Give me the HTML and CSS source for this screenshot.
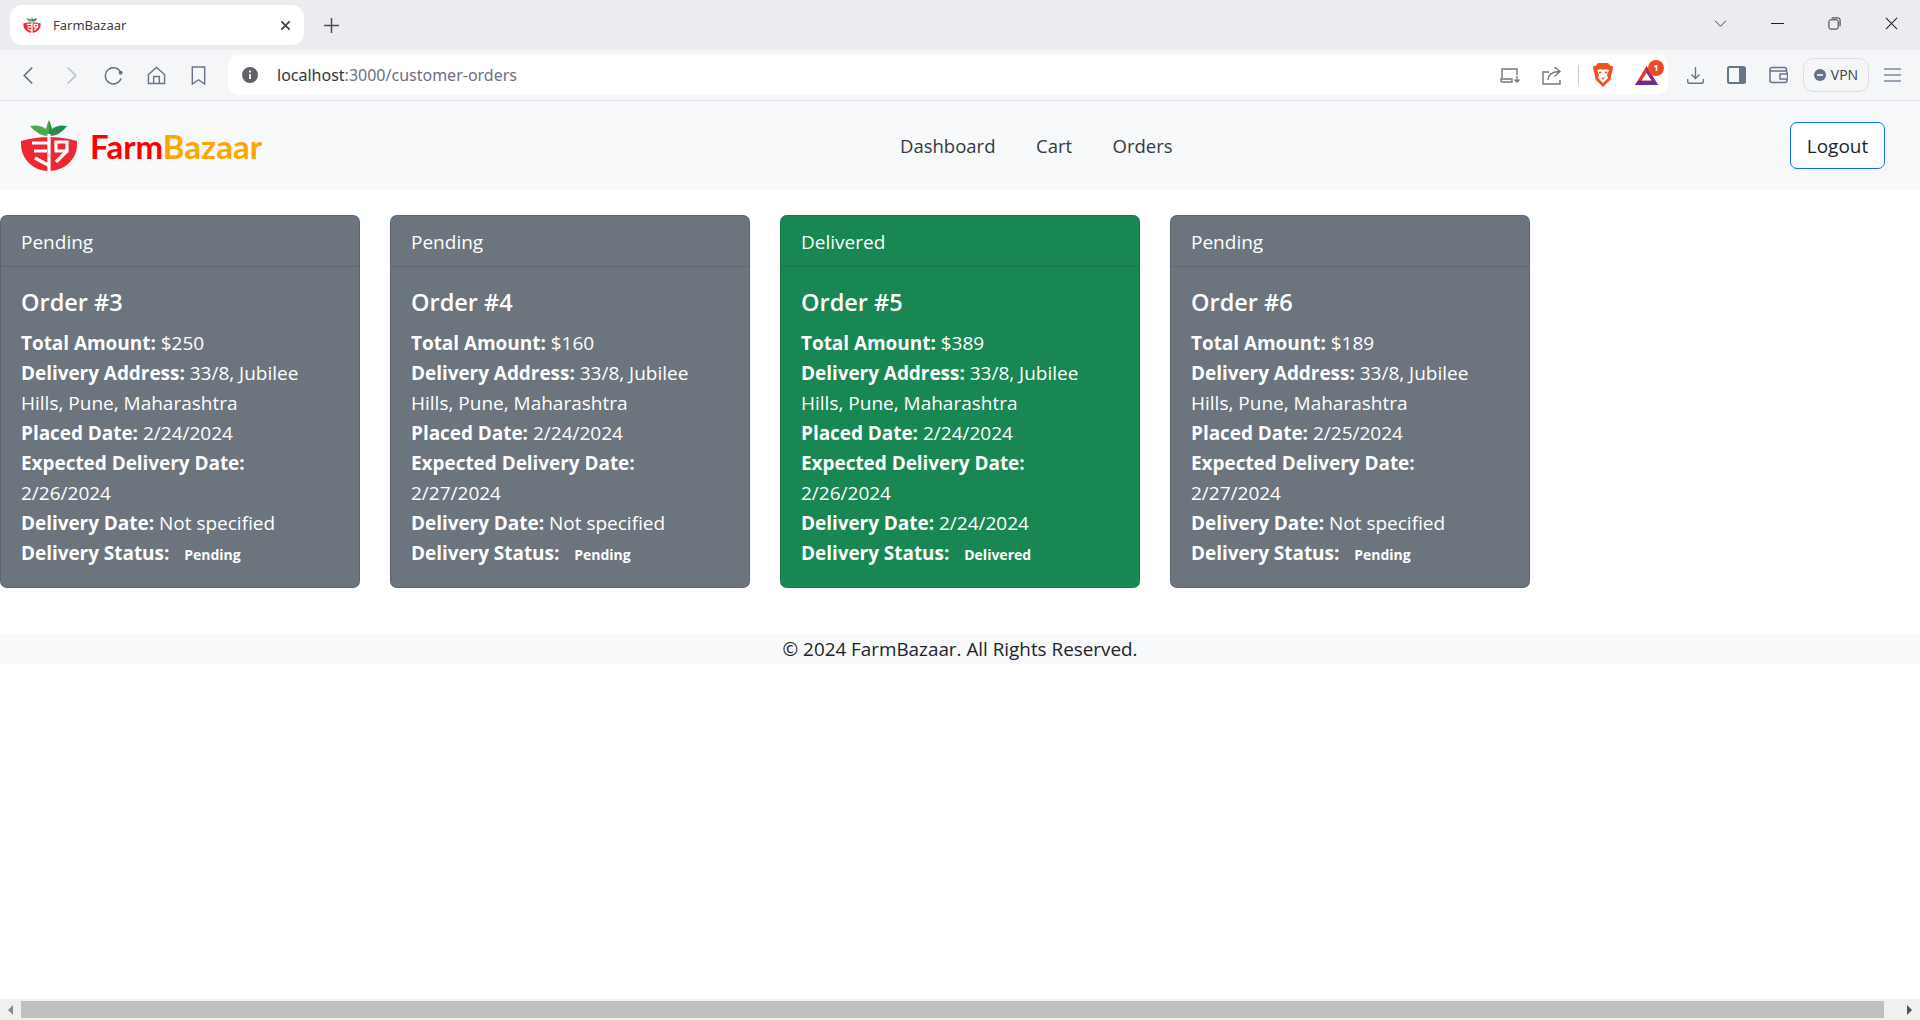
FILE: index.html
```html
<!DOCTYPE html>
<html lang="en">
<head>
  <meta charset="UTF-8">
  <title>FarmBazaar</title>
  <meta name="viewport" content="width=device-width, initial-scale=1">
  <link rel="stylesheet" href="styles.css">
</head>
<body>

<!-- browser tab strip -->
<div class="tabstrip">
  <div class="tab">
    <svg class="favicon" viewBox="0 0 58 52">
      <path d="M10 6 Q20 4 26 9 Q27 4 29 0 L29 16 Q18 16 10 6Z" fill="#4fa84f"/>
      <path d="M47 6 Q38 4 32 9 Q31 4 29 0 L29 16 Q40 16 47 6Z" fill="#1f8f4a"/>
      <path d="M1 21 Q29 13 57 21 Q58 38 44 47 Q36 51 29 51 Q20 51 14 47 Q0 38 1 21Z" fill="#ed2832"/>
      <path d="M12 24h16M14 32h13M15 38l13 7M29 14v38M36 24h11v8H36zM47 32l-11 11" stroke="#fff" stroke-width="4" fill="none"/>
    </svg>
    <span class="tab-title">FarmBazaar</span>
    <svg class="tab-close" viewBox="0 0 12 12"><path d="M1.500 1.500l9 9M10.500 1.500l-9 9" stroke="#3c4043" stroke-width="1.800"/></svg>
  </div>
  <svg class="new-tab" viewBox="0 0 16 16"><path d="M8 0v16M0 8h16" stroke="#4a4d55" stroke-width="1.600"/></svg>
  <div class="win-controls">
    <svg class="win-icon" viewBox="0 0 14 8"><path d="M1 1l6 6 6-6" stroke="#333" fill="none"/></svg>
    <svg class="win-icon" viewBox="0 0 14 14"><path d="M0 7h14" stroke="#222" stroke-width="1.100"/></svg>
    <svg class="win-icon" viewBox="0 0 14 14"><rect x="1" y="3" width="10" height="10" rx="2" stroke="#222" fill="none"/><path d="M4 1h7a2 2 0 0 1 2 2v7" stroke="#222" fill="none"/></svg>
    <svg class="win-icon" viewBox="0 0 14 14"><path d="M1 1l12 12M13 1L1 13" stroke="#222" stroke-width="1.100"/></svg>
  </div>
</div>

<!-- browser toolbar -->
<div class="toolbar">
  <div class="nav-icons">
    <svg class="tool-icon" viewBox="0 0 20 20"><path d="M14 1.500l-8.500 8.500 8.500 8.500" stroke="#5f6b85" stroke-width="1.600" fill="none"/></svg>
    <svg class="tool-icon" viewBox="0 0 20 20"><path d="M6 1.500l8.500 8.500-8.500 8.500" stroke="#b7bdca" stroke-width="1.600" fill="none"/></svg>
    <svg class="tool-icon" viewBox="0 0 20 20"><path d="M17.500 6.500A8.500 8.500 0 1 0 18 13" stroke="#5f6b85" stroke-width="1.500" fill="none"/><circle cx="17.500" cy="7" r="2" fill="#5f6b85"/></svg>
    <svg class="tool-icon" viewBox="0 0 20 20"><path d="M1.500 9L10 1.500 18.500 9v9.500h-17zM7 18.500v-7.500h6v7.500" stroke="#6a7489" stroke-width="1.500" fill="none"/></svg>
    <svg class="tool-icon" viewBox="0 0 20 20"><path d="M3.500 1h13v18L10 14.500 3.500 19z" stroke="#6a7489" stroke-width="1.500" fill="none"/></svg>
  </div>
  <div class="urlbar">
    <svg class="info-icon" viewBox="0 0 16 16"><circle cx="8" cy="8" r="8" fill="#5f6368"/><path d="M8 7v5M8 3.500v2" stroke="#fff" stroke-width="1.800"/></svg>
    <span class="url"><span class="url-host">localhost</span>:3000/customer-orders</span>
    <div class="url-actions">
      <svg class="icon-laptop" viewBox="0 0 21 15"><path d="M2 10V1h15v6M1 11h11v3H2a1 1 0 0 1-1-1z" stroke="#777" stroke-width="1.400" fill="none"/><path d="M17 8v6M14.500 11.500l2.500 2.500 2.500-2.500" stroke="#777" stroke-width="1.400" fill="none"/></svg>
      <svg class="icon-share" viewBox="0 0 20 19"><path d="M7 6H1v12h17v-4M6 14C6 9 9 6 17 5.500M12.500 1l5.500 4.500-5.500 5" stroke="#777" stroke-width="1.400" fill="none"/></svg>
      <span class="url-sep"></span>
      <svg class="brave-icon" viewBox="0 0 20 24"><path d="M5 0h10l2 2.500 3 1-.5 4-1 3-1 6-7.500 7.500L2.500 16.500l-1-6-1-3L0 3.500l3-1z" fill="#f4511e"/><path d="M4 7l4-1 2 1 2-1 4 1-2 5 1 3-5 5-5-5 1-3z" fill="#fff"/><path d="M8 9l-2 1M12 9l2 1" stroke="#f4511e" stroke-width="1.500"/><path d="M8 14l2 1 2-1-2 3z" fill="#f4511e"/></svg>
      <div class="bat">
        <svg class="bat-icon" viewBox="0 0 23 19"><path d="M11.500 0L23 19H0z" fill="#e8352a"/><path d="M11.500 0L23 19h-5L11.500 8z" fill="#8a2c8e"/><path d="M0 19l3.500-4.500h16L23 19z" fill="#662d91"/><path d="M11.500 7l5 7.500h-10z" fill="#fff"/></svg>
        <span class="bat-badge">1</span>
      </div>
    </div>
  </div>
  <div class="right-icons">
    <svg class="icon-download" viewBox="0 0 17 17"><path d="M8.500 0v11M4.500 7.500l4 4 4-4M.7 12v2.500a1.800 1.800 0 0 0 1.800 1.800h12a1.800 1.800 0 0 0 1.800-1.800V12" stroke="#6a7489" stroke-width="1.400" fill="none"/></svg>
    <svg class="icon-panel" viewBox="0 0 19 18"><rect x="1" y="1" width="17" height="16" rx="1.500" stroke="#6a7489" stroke-width="2" fill="none"/><rect x="12" y="1" width="6" height="16" fill="#6a7489"/></svg>
    <svg class="icon-wallet" viewBox="0 0 19 18"><path d="M17.500 5V3.500A2 2 0 0 0 15.500 1.500H3A2 2 0 0 0 1 3.500v11a2 2 0 0 0 2 2h13a2 2 0 0 0 2-2V13M1 5h15.500a1.500 1.500 0 0 1 1.500 1.500V8M11 8h7.500v5H11z" stroke="#6a7489" stroke-width="1.500" fill="none"/></svg>
    <div class="vpn">
      <svg class="vpn-icon" viewBox="0 0 12 12"><circle cx="6" cy="6" r="6" fill="#666f8c"/><path d="M3 6h6" stroke="#fff" stroke-width="1.600"/></svg>
      <span>VPN</span>
    </div>
    <svg class="icon-menu" viewBox="0 0 17 14"><path d="M0 1h17M0 7h17M0 13h17" stroke="#7d879b" stroke-width="1.500"/></svg>
  </div>
</div>

<!-- site navbar -->
<nav class="navbar">
  <div class="brand">
    <svg class="logo" viewBox="0 0 58 52">
      <path d="M10 6 Q20 4 26 9 Q27 4 29 0 L29 16 Q18 16 10 6Z" fill="#4fa84f"/>
      <path d="M47 6 Q38 4 32 9 Q31 4 29 0 L29 16 Q40 16 47 6Z" fill="#1f8f4a"/>
      <path d="M1 21 Q29 13 57 21 Q58 38 44 47 Q36 51 29 51 Q20 51 14 47 Q0 38 1 21Z" fill="#ed2832"/>
      <path d="M12 23h16M14 31h13M15 38l13 7M29 14v38M36 22h11v9H36zM47 31l-11 11" stroke="#fff" stroke-width="3.200" fill="none"/>
    </svg>
    <span class="brand-text"><span class="brand-farm">Farm</span><span class="brand-bazaar">Bazaar</span></span>
  </div>
  <div class="nav-links">
    <a>Dashboard</a>
    <a>Cart</a>
    <a>Orders</a>
  </div>
  <button class="logout">Logout</button>
</nav>

<main class="orders">
  <div class="card card-pending">
    <div class="card-header">Pending</div>
    <div class="card-body">
      <h5>Order #3</h5>
      <p><b>Total Amount:</b> $250</p>
      <p><b>Delivery Address:</b> <span>33/8, Jubilee</span> <span>Hills, Pune, Maharashtra</span></p>
      <p><b>Placed Date:</b> 2/24/2024</p>
      <p><b>Expected Delivery Date:</b> 2/26/2024</p>
      <p><b>Delivery Date:</b> Not specified</p>
      <p><b>Delivery Status:</b> <span class="badge">Pending</span></p>
    </div>
  </div>
  <div class="card card-pending">
    <div class="card-header">Pending</div>
    <div class="card-body">
      <h5>Order #4</h5>
      <p><b>Total Amount:</b> $160</p>
      <p><b>Delivery Address:</b> <span>33/8, Jubilee</span> <span>Hills, Pune, Maharashtra</span></p>
      <p><b>Placed Date:</b> 2/24/2024</p>
      <p><b>Expected Delivery Date:</b> 2/27/2024</p>
      <p><b>Delivery Date:</b> Not specified</p>
      <p><b>Delivery Status:</b> <span class="badge">Pending</span></p>
    </div>
  </div>
  <div class="card card-delivered">
    <div class="card-header">Delivered</div>
    <div class="card-body">
      <h5>Order #5</h5>
      <p><b>Total Amount:</b> $389</p>
      <p><b>Delivery Address:</b> <span>33/8, Jubilee</span> <span>Hills, Pune, Maharashtra</span></p>
      <p><b>Placed Date:</b> 2/24/2024</p>
      <p><b>Expected Delivery Date:</b> 2/26/2024</p>
      <p><b>Delivery Date:</b> 2/24/2024</p>
      <p><b>Delivery Status:</b> <span class="badge">Delivered</span></p>
    </div>
  </div>
  <div class="card card-pending">
    <div class="card-header">Pending</div>
    <div class="card-body">
      <h5>Order #6</h5>
      <p><b>Total Amount:</b> $189</p>
      <p><b>Delivery Address:</b> <span>33/8, Jubilee</span> <span>Hills, Pune, Maharashtra</span></p>
      <p><b>Placed Date:</b> 2/25/2024</p>
      <p><b>Expected Delivery Date:</b> 2/27/2024</p>
      <p><b>Delivery Date:</b> Not specified</p>
      <p><b>Delivery Status:</b> <span class="badge">Pending</span></p>
    </div>
  </div>
</main>

<footer class="footer">© 2024 FarmBazaar. All Rights Reserved.</footer>

<div class="spacer"></div>

<div class="hscroll">
  <span class="arrow-left"></span>
  <div class="hscroll-thumb"></div>
  <span class="arrow-right"></span>
</div>

</body>
</html>
```

FILE: styles.css
```css
html, body { height: 100%; }
body { margin: 0; display: flex; flex-direction: column; height: 1020px; overflow: hidden; background: #fff; color: #212529; font-family: "Open Sans", "Noto Sans", sans-serif; font-size: 19px; line-height: 30px; }

/* browser chrome */
.tabstrip { height: 50px; background: #ebecf0; display: flex; align-items: flex-start; padding: 5px 0 0 10px; box-sizing: border-box; flex: none; }
.tab { width: 294px; height: 40px; background: #fff; border-radius: 12px; display: flex; align-items: center; padding: 0 12px 0 13px; box-sizing: border-box; font-size: 13px; color: #3c4043; }
.favicon { width: 18px; height: 18px; margin-right: 12px; }
.tab-title { flex: 1; font-family: "Noto Sans", sans-serif; }
.tab-close { width: 11px; height: 11px; margin-right: 1px; }
.new-tab { width: 15px; height: 15px; margin: 13px 0 0 20px; }
.win-controls { margin-left: auto; display: flex; align-items: center; gap: 44px; padding: 12px 22px 0 0; }
.win-icon { width: 13px; height: 13px; }

.toolbar { height: 51px; background: #f5f6f8; border-bottom: 1px solid #e4e5e8; box-sizing: border-box; display: flex; align-items: center; flex: none; }
.nav-icons { display: flex; align-items: center; gap: 23.500px; padding-left: 19px; width: 228px; box-sizing: border-box; flex: none; }
.tool-icon { width: 19px; height: 19px; flex: none; }
.urlbar { width: 1440px; height: 40px; background: #fff; border-radius: 12px; display: flex; align-items: center; padding: 0 10px 0 14px; box-sizing: border-box; flex: none; }
.info-icon { width: 16px; height: 16px; margin-right: 19px; }
.url { font-size: 16px; color: #6b7280; font-family: "Noto Sans", sans-serif; }
.url-host { color: #33363b; }
.url-actions { margin-left: auto; display: flex; align-items: center; }
.icon-laptop { width: 21px; height: 15px; margin-right: 21px; }
.icon-share { width: 20px; height: 19px; margin-right: 16px; }
.url-sep { width: 1px; height: 20px; background: #c8c9cc; margin-right: 14px; }
.brave-icon { width: 20px; height: 24px; margin-right: 22px; }
.bat { position: relative; width: 23px; height: 19px; }
.bat-icon { width: 23px; height: 19px; display: block; }
.bat-badge { position: absolute; top: -6px; left: 13px; width: 16px; height: 16px; border-radius: 50%; background: #f04a24; color: #fff; font-size: 9px; line-height: 16px; text-align: center; font-weight: 700; }
.right-icons { display: flex; align-items: center; padding-left: 19px; }
.icon-download { width: 17px; height: 17px; margin-right: 23px; }
.icon-panel { width: 19px; height: 18px; margin-right: 23px; }
.icon-wallet { width: 19px; height: 18px; margin-right: 15px; }
.icon-menu { width: 17px; height: 14px; margin-left: 15px; }
.vpn { display: flex; align-items: center; gap: 5px; width: 66px; height: 34px; border: 1px solid #dcdee2; border-radius: 10px; box-sizing: border-box; justify-content: center; font-size: 14px; color: #3b3f47; }
.vpn-icon { width: 12px; height: 12px; }

/* site navbar */
.navbar { height: 89px; background: #f8f9fa; display: flex; align-items: center; padding: 0 35px 0 20px; box-sizing: border-box; flex: none; }
.brand { display: flex; align-items: center; gap: 12px; width: 880px; flex: none; }
.logo { width: 58px; height: 52px; }
.brand-text { font-family: "Lato", sans-serif; font-weight: 700; font-size: 33px; }
.brand-farm { color: #ff0000; }
.brand-bazaar { color: #ffa500; }
.nav-links { display: flex; gap: 40.500px; font-size: 18.500px; color: #343a40; }
.logout { margin-left: auto; width: 95px; height: 47px; background: #fff; border: 1px solid #0d6efd; border-radius: 7px; font: inherit; color: #212529; padding: 0; }

/* order cards */
.orders { display: flex; gap: 30px; padding-top: 25px; flex: none; }
.card { width: 360px; border: 1px solid rgba(0,0,0,.125); border-radius: 7px; color: #fff; box-sizing: border-box; }
.card-pending { background: #6c757d; }
.card-delivered { background: #198754; }
.card-header { padding: 11px 20px 9px; border-bottom: 1px solid rgba(0,0,0,.125); height: 51px; box-sizing: border-box; }
.card-body { padding: 20px 30px 17px 20px; }
.card-body h5 { margin: 0 0 11px; font-size: 23.500px; font-weight: 600; line-height: 30px; }
.card-body p { margin: 0; }
.card-body b { letter-spacing: -.05px; }
.badge { font-size: 14px; font-weight: 700; padding: 0 15px 0 10px; }

.footer { margin-top: 46px; height: 30px; background: #f8f9fa; text-align: center; flex: none; font-size: 18.850px; }
.spacer { flex: 1; }

.hscroll { height: 21px; background: #f0f0f0; display: flex; align-items: center; flex: none; }
.arrow-left { width: 0; height: 0; border: 5px solid transparent; border-right: 5px solid #8a8a8a; border-left: 0; margin: 0 8px; }
.hscroll-thumb { flex: 1; height: 17px; background: #c0c0c0; }
.arrow-right { width: 0; height: 0; border: 5px solid transparent; border-left: 5px solid #505050; border-right: 0; margin: 0 8px 0 23px; }
```
